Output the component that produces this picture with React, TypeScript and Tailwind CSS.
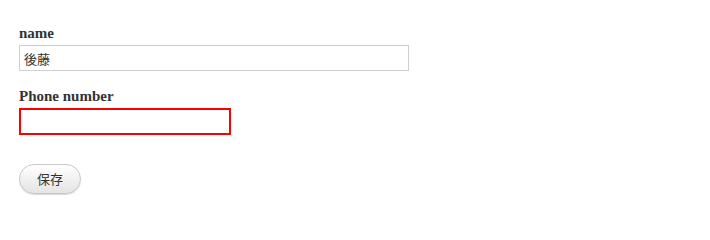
export default function App() {
  return (
    <div className="min-h-[230px] w-[710px] bg-white pl-[19px] pt-[23px] text-[#333]">
      <div className="flex flex-col">
        <label className="text-[15px] font-bold leading-5 [font-family:'Liberation_Serif',serif]">name</label>
        <input
          type="text"
          defaultValue="後藤"
          className="mt-[2px] h-[26px] w-[390px] border border-[#cfcfcf] px-[4px] text-[13px] text-[#333] outline-none [font-family:'Noto_Sans_CJK_JP',sans-serif]"
        />
        <label className="mt-[15px] text-[15px] font-bold leading-5 [font-family:'Liberation_Serif',serif]">
          Phone number
        </label>
        <input
          type="text"
          className="mt-[2px] h-[27px] w-[212px] border-2 border-[#ff0000] px-[4px] text-[13px] outline-none"
        />
        <div className="mt-[29px]">
          <button className="h-[30px] w-[62px] rounded-full border border-[#c8c8c8] bg-gradient-to-b from-white to-[#e4e4e4] text-[13px] text-[#333] shadow-[0_1px_1px_rgba(0,0,0,0.15)] [font-family:'Noto_Sans_CJK_JP',sans-serif]">
            保存
          </button>
        </div>
      </div>
    </div>
  )
}
